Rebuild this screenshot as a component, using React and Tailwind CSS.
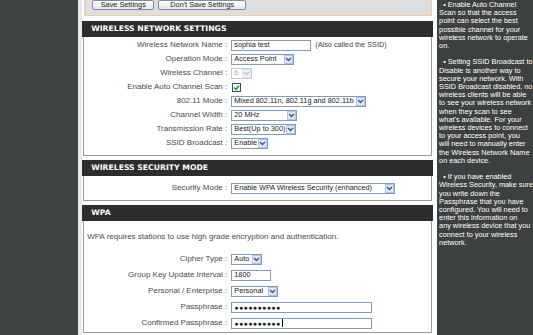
import React from 'react';

const SANS = { fontFamily: '"Liberation Sans", Arial, sans-serif' };
const HEAD = { fontFamily: '"DejaVu Sans", Verdana, sans-serif' };

const sideParas = [
  [
    '\u00a0\u00a0\u2022 Enable Auto Channel',
    'Scan so that the access',
    'point can select the best',
    'possible channel for your',
    'wireless network to operate',
    'on.',
  ],
  [
    '\u00a0\u00a0\u2022 Setting SSID Broadcast to',
    'Disable is another way to',
    'secure your network. With',
    'SSID Broadcast disabled, no',
    'wireless clients will be able',
    'to see your wireless network',
    'when they scan to see',
    "what's available. For your",
    'wireless devices to connect',
    'to your access point, you',
    'will need to manually enter',
    'the Wireless Network Name',
    'on each device.',
  ],
  [
    '\u00a0\u00a0\u2022 If you have enabled',
    'Wireless Security, make sure',
    'you write down the',
    'Passphrase that you have',
    'configured. You will need to',
    'enter this information on',
    'any wireless device that you',
    'connect to your wireless',
    'network.',
  ],
];

function Chevron({ faded }) {
  return (
    <svg width="7" height="5" viewBox="0 0 7 5">
      <path
        d="M1 1 L3.5 3.5 L6 1"
        fill="none"
        stroke={faded ? '#b8c2d6' : '#3d5384'}
        strokeWidth="1.4"
      />
    </svg>
  );
}

function Select({ value, width, disabled }) {
  return (
    <div
      className={`flex items-center h-[11px] border ${
        disabled ? 'border-[#c8c8c8] text-[#b0b0b0]' : 'border-[#7f9db9] text-[#222]'
      } bg-white`}
      style={{ width }}
    >
      <span className="flex-1 pl-[2px] text-[7.3px] leading-none whitespace-nowrap overflow-hidden">
        {value}
      </span>
      <span
        className={`flex items-center justify-center w-[9px] h-[9px] border ${
          disabled ? 'border-[#dde3ee] bg-[#f2f4f8]' : 'border-[#b3c3e6] bg-[#dfe7f8]'
        }`}
      >
        <Chevron faded={disabled} />
      </span>
    </div>
  );
}

function Input({ value, width, caret }) {
  return (
    <div
      className="flex items-center h-[11px] border border-[#7f9db9] bg-white text-[#222] pl-[2px] text-[7.3px] leading-none whitespace-nowrap"
      style={{ width }}
    >
      {value}
      {caret && <span className="inline-block w-px h-[8px] bg-black ml-[1px]" />}
    </div>
  );
}

function Row({ label, h = 'h-[14px]', children }) {
  return (
    <div className={`flex items-center ${h}`}>
      <div className="w-[147px] text-right pr-[4px] text-[8px] leading-none text-[#4a4a4a] whitespace-nowrap">
        {label}
      </div>
      <div className="flex items-center">{children}</div>
    </div>
  );
}

function Header({ title }) {
  return (
    <div
      className="h-[16px] bg-[#2d2d2d] flex items-center pl-[9px] text-white font-bold text-[7.7px] leading-none"
      style={HEAD}
    >
      {title}
    </div>
  );
}

function Dots({ n }) {
  return <span className="tracking-[0.4px] text-[7px]">{'\u25cf'.repeat(n)}</span>;
}

export default function App() {
  return (
    <div className="w-[533px] h-[335px] flex bg-white overflow-hidden" style={SANS}>
      {/* left rail */}
      <div className="w-[79px] bg-[#3f4343]" />
      <div className="w-[4px] bg-[#e9e9e9]" />

      {/* main column */}
      <div className="w-[354px] flex flex-col">
        <div className="h-[16px] ml-[2px] mr-[1px] bg-[#dedede] border-x border-b border-[#f0c9a6] flex items-start gap-[4px] pl-[7px]">
          <button className="h-[10px] w-[62px] border border-[#7d8ca8] rounded-[2px] bg-gradient-to-b from-white to-[#e4e4e4] text-[7.3px] leading-none text-[#222]">
            Save Settings
          </button>
          <button className="h-[10px] w-[88px] border border-[#7d8ca8] rounded-[2px] bg-gradient-to-b from-white to-[#e4e4e4] text-[7.3px] leading-none text-[#222]">
            Don't Save Settings
          </button>
        </div>

        <div className="mt-[5px]">
          <Header title="WIRELESS NETWORK SETTINGS" />
          <div className="mx-[1px] border border-t-0 border-[#9a9a9a] pt-[1px] pb-[5px]">
            <Row label="Wireless Network Name :">
              <Input value="sophia test" width="80px" />
              <span className="ml-[4px] text-[7.3px] leading-none text-[#444]">(Also called the SSID)</span>
            </Row>
            <Row label="Operation Mode :">
              <Select value="Access Point" width="63px" />
            </Row>
            <Row label="Wireless Channel :">
              <Select value="6" width="21px" disabled />
            </Row>
            <Row label="Enable Auto Channel Scan :">
              <div className="ml-[1px] w-[9px] h-[9px] border border-[#1c5180] bg-white flex items-center justify-center">
                <svg width="7" height="7" viewBox="0 0 7 7">
                  <path d="M1 3.5 L3 5.5 L6 1.5" fill="none" stroke="#21a121" strokeWidth="1.5" />
                </svg>
              </div>
            </Row>
            <Row label="802.11 Mode :">
              <Select value="Mixed 802.11n, 802.11g and 802.11b" width="135px" />
            </Row>
            <Row label="Channel Width :">
              <Select value="20 MHz" width="66px" />
            </Row>
            <Row label="Transmission Rate :">
              <Select value="Best(Up to 300)" width="65px" />
            </Row>
            <Row label="SSID Broadcast :">
              <Select value="Enable" width="37px" />
            </Row>
          </div>
        </div>

        <div className="mt-[4px]">
          <Header title="WIRELESS SECURITY MODE" />
          <div className="mx-[1px] border border-t-0 border-[#9a9a9a] pt-[5px] pb-[5px]">
            <Row label="Security Mode :">
              <Select value="Enable WPA Wireless Security (enhanced)" width="164px" />
            </Row>
          </div>
        </div>

        <div className="mt-[4px]">
          <Header title="WPA" />
          <div className="mx-[1px] border border-t-0 border-[#9a9a9a] pt-[11px] pb-[1px]">
            <p className="pl-[3px] h-[10px] flex items-center text-[8px] leading-none text-[#4a4a4a] whitespace-nowrap">
              WPA requires stations to use high grade encryption and authentication.
            </p>
            <div className="mt-[9px]">
              <Row label="Cipher Type :" h="h-[16px]">
                <Select value="Auto" width="31px" />
              </Row>
              <Row label="Group Key Update Interval :" h="h-[16px]">
                <Input value="1800" width="40px" />
              </Row>
              <Row label="Personal / Enterprise :" h="h-[16px]">
                <Select value="Personal" width="47px" />
              </Row>
              <Row label="Passphrase :" h="h-[16px]">
                <Input value={<Dots n={10} />} width="141px" />
              </Row>
              <Row label="Confirmed Passphrase :" h="h-[16px]">
                <Input value={<Dots n={10} />} width="141px" caret />
              </Row>
            </div>
          </div>
        </div>
      </div>

      <div className="w-[4px] bg-white" />

      {/* help rail */}
      <div className="flex-1 bg-[#3d4040] pl-[2px] pt-[1px] text-white text-[7.3px] leading-[8.2px] flex flex-col gap-[8.2px]">
        {sideParas.map((lines, i) => (
          <div key={i}>
            {lines.map((l, j) => (
              <div key={j} className="whitespace-nowrap">
                {l}
              </div>
            ))}
          </div>
        ))}
      </div>
    </div>
  );
}
